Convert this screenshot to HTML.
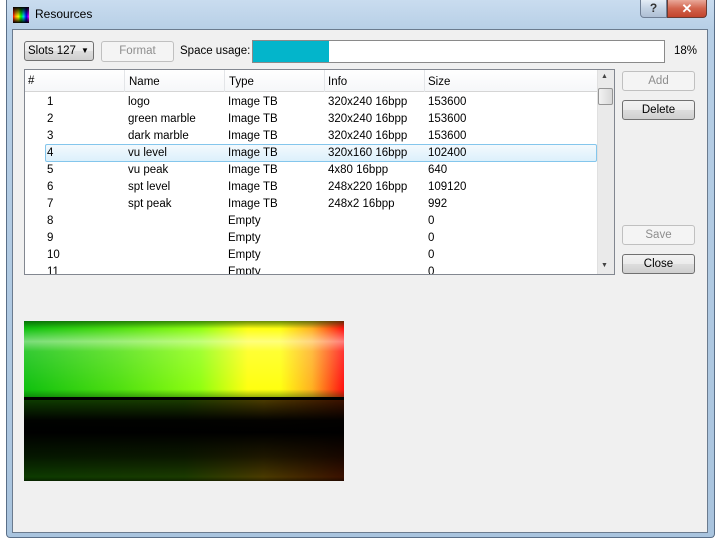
<!DOCTYPE html>
<html><head><style>
*{margin:0;padding:0;box-sizing:border-box}
body{width:720px;height:540px;background:#fff;position:relative;overflow:hidden;font-family:"Liberation Sans",sans-serif;font-size:11.5px;color:#000}
.abs{position:absolute}
.frame{left:6px;top:0;width:709px;height:538px;background:linear-gradient(180deg,#c9dcef 0,#b7cfe6 30px,#a9c4de 100%);border:1px solid #5a6f88;border-top:none;border-radius:0 0 4px 4px}
.client{left:12px;top:29px;width:696px;height:504px;background:#f0f0f0;border:1px solid #6b7b8e}
.btn{position:absolute;border:1px solid #707070;border-radius:3px;background:linear-gradient(#f2f2f2,#ebebeb 50%,#dddddd 51%,#cfcfcf);text-align:center;line-height:18px;font-size:11.5px}
.dis{border-color:#c0c0c0;background:#f4f4f4;color:#8d8d8d}
.row{position:absolute;left:0;height:17px;line-height:17px;width:572px}
.row span{position:absolute}
</style></head><body>
<div class="abs frame"></div>
<div class="abs" style="left:13px;top:7px;width:16px;height:16px;background:linear-gradient(90deg,#f00,#fa0,#ff0,#0f0,#0cf,#00f,#f0f);"></div>
<div class="abs" style="left:13px;top:7px;width:16px;height:16px;background:linear-gradient(#000 0,rgba(0,0,0,0) 60%,#000 100%)"></div>
<div class="abs" style="left:35px;top:7px;font-size:12px">Resources</div>
<div class="abs" style="left:640px;top:0;width:27px;height:18px;border:1px solid #6f7f95;border-top:none;border-radius:0 0 0 4px;background:linear-gradient(#e4ecf5,#c3d2e3 50%,#aebfd4);text-align:center;font-size:12px;font-weight:bold;color:#333;line-height:17px">?</div>
<div class="abs" style="left:667px;top:0;width:40px;height:18px;border:1px solid #6a3b33;border-top:none;border-radius:0 0 4px 0;background:linear-gradient(#e9a99a,#d2634c 50%,#c2442c);text-align:center;color:#fff;font-weight:bold;font-size:13px;line-height:17px">✕</div>
<div class="abs client"></div>

<div class="btn" style="left:24px;top:41px;width:70px;height:20px;text-align:left;padding-left:3px">Slots 127 <span style="position:absolute;left:56px;top:0;font-size:8px">▼</span></div>
<div class="btn dis" style="left:101px;top:41px;width:73px;height:21px">Format</div>
<div class="abs" style="left:180px;top:45px">Space usage:</div>
<div class="abs" style="left:252px;top:40px;width:413px;height:23px;border:1px solid #8a8a8a;background:#fff"><div style="width:76px;height:21px;background:#03b5cb"></div></div>
<div class="abs" style="left:674px;top:45px">18%</div>

<div class="abs" style="left:24px;top:69px;width:591px;height:206px;border:1px solid #828790;background:#fff;overflow:hidden">
 <div class="abs" style="left:0;top:0;width:572px;height:22px;background:linear-gradient(#fff,#f6f7f9);border-bottom:1px solid #d5d5d5"></div>
 <div class="abs" style="left:99px;top:0;width:1px;height:22px;background:#e3e5e8"></div>
 <div class="abs" style="left:199px;top:0;width:1px;height:22px;background:#e3e5e8"></div>
 <div class="abs" style="left:299px;top:0;width:1px;height:22px;background:#e3e5e8"></div>
 <div class="abs" style="left:399px;top:0;width:1px;height:22px;background:#e3e5e8"></div>
 <div class="abs" style="left:3px;top:5px">#</div>
 <div class="abs" style="left:104px;top:6px">Name</div>
 <div class="abs" style="left:204px;top:6px">Type</div>
 <div class="abs" style="left:303px;top:6px">Info</div>
 <div class="abs" style="left:403px;top:6px">Size</div>
 <div class="abs" style="left:20px;top:74px;width:552px;height:18px;border:1px solid #84c6ec;border-radius:2px;background:linear-gradient(#f3f9fd,#dcf0fb)"></div>
 <div class="row" style="top:24px"><span style="left:22px">1</span><span style="left:103px">logo</span><span style="left:203px">Image TB</span><span style="left:303px">320x240 16bpp</span><span style="left:403px">153600</span></div>
 <div class="row" style="top:41px"><span style="left:22px">2</span><span style="left:103px">green marble</span><span style="left:203px">Image TB</span><span style="left:303px">320x240 16bpp</span><span style="left:403px">153600</span></div>
 <div class="row" style="top:58px"><span style="left:22px">3</span><span style="left:103px">dark marble</span><span style="left:203px">Image TB</span><span style="left:303px">320x240 16bpp</span><span style="left:403px">153600</span></div>
 <div class="row" style="top:75px"><span style="left:22px">4</span><span style="left:103px">vu level</span><span style="left:203px">Image TB</span><span style="left:303px">320x160 16bpp</span><span style="left:403px">102400</span></div>
 <div class="row" style="top:92px"><span style="left:22px">5</span><span style="left:103px">vu peak</span><span style="left:203px">Image TB</span><span style="left:303px">4x80 16bpp</span><span style="left:403px">640</span></div>
 <div class="row" style="top:109px"><span style="left:22px">6</span><span style="left:103px">spt level</span><span style="left:203px">Image TB</span><span style="left:303px">248x220 16bpp</span><span style="left:403px">109120</span></div>
 <div class="row" style="top:126px"><span style="left:22px">7</span><span style="left:103px">spt peak</span><span style="left:203px">Image TB</span><span style="left:303px">248x2 16bpp</span><span style="left:403px">992</span></div>
 <div class="row" style="top:143px"><span style="left:22px">8</span><span style="left:203px">Empty</span><span style="left:403px">0</span></div>
 <div class="row" style="top:160px"><span style="left:22px">9</span><span style="left:203px">Empty</span><span style="left:403px">0</span></div>
 <div class="row" style="top:177px"><span style="left:22px">10</span><span style="left:203px">Empty</span><span style="left:403px">0</span></div>
 <div class="row" style="top:194px"><span style="left:22px">11</span><span style="left:203px">Empty</span><span style="left:403px">0</span></div>
 <div class="abs" style="left:572px;top:0;width:17px;height:204px;background:#eaeaea;border-left:1px solid #e0e0e0"></div>
 <div class="abs" style="left:576px;top:3px;font-size:7px;color:#444">▲</div>
 <div class="abs" style="left:576px;top:192px;font-size:7px;color:#444">▼</div>
 <div class="abs" style="left:573px;top:18px;width:15px;height:17px;border:1px solid #959595;border-radius:2px;background:linear-gradient(90deg,#f2f2f2,#d8d8d8)"></div>
</div>

<div class="btn dis" style="left:622px;top:71px;width:73px;height:20px">Add</div>
<div class="btn" style="left:622px;top:100px;width:73px;height:20px">Delete</div>
<div class="btn dis" style="left:622px;top:225px;width:73px;height:20px">Save</div>
<div class="btn" style="left:622px;top:254px;width:73px;height:20px">Close</div>

<div class="abs" style="left:24px;top:321px;width:320px;height:160px;background:#000">
 <div class="abs" style="left:0;top:0;width:320px;height:76px;background:linear-gradient(90deg,#10c010 0%,#50e010 30%,#90ff10 55%,#ffff10 70%,#ffff10 80%,#ffb020 90%,#ff1010 100%)"></div>
 <div class="abs" style="left:0;top:0;width:320px;height:76px;background:linear-gradient(rgba(0,60,0,.6) 0,rgba(255,255,255,0) 10%,rgba(255,255,255,.45) 27%,rgba(255,255,255,.15) 40%,rgba(255,255,255,0) 90%,rgba(0,60,0,.4) 100%)"></div>
 <div class="abs" style="left:0;top:79px;width:320px;height:81px;background:linear-gradient(90deg,#0c3a00 0%,#1a3a00 50%,#4a3a00 75%,#3a1000 100%)"></div>
 <div class="abs" style="left:0;top:79px;width:320px;height:81px;background:linear-gradient(rgba(0,0,0,0) 0,rgba(0,0,0,.95) 25%,#000 40%,rgba(0,0,0,.6) 70%,rgba(0,0,0,0) 95%,rgba(0,0,0,.4) 100%)"></div>
</div>
</body></html>
